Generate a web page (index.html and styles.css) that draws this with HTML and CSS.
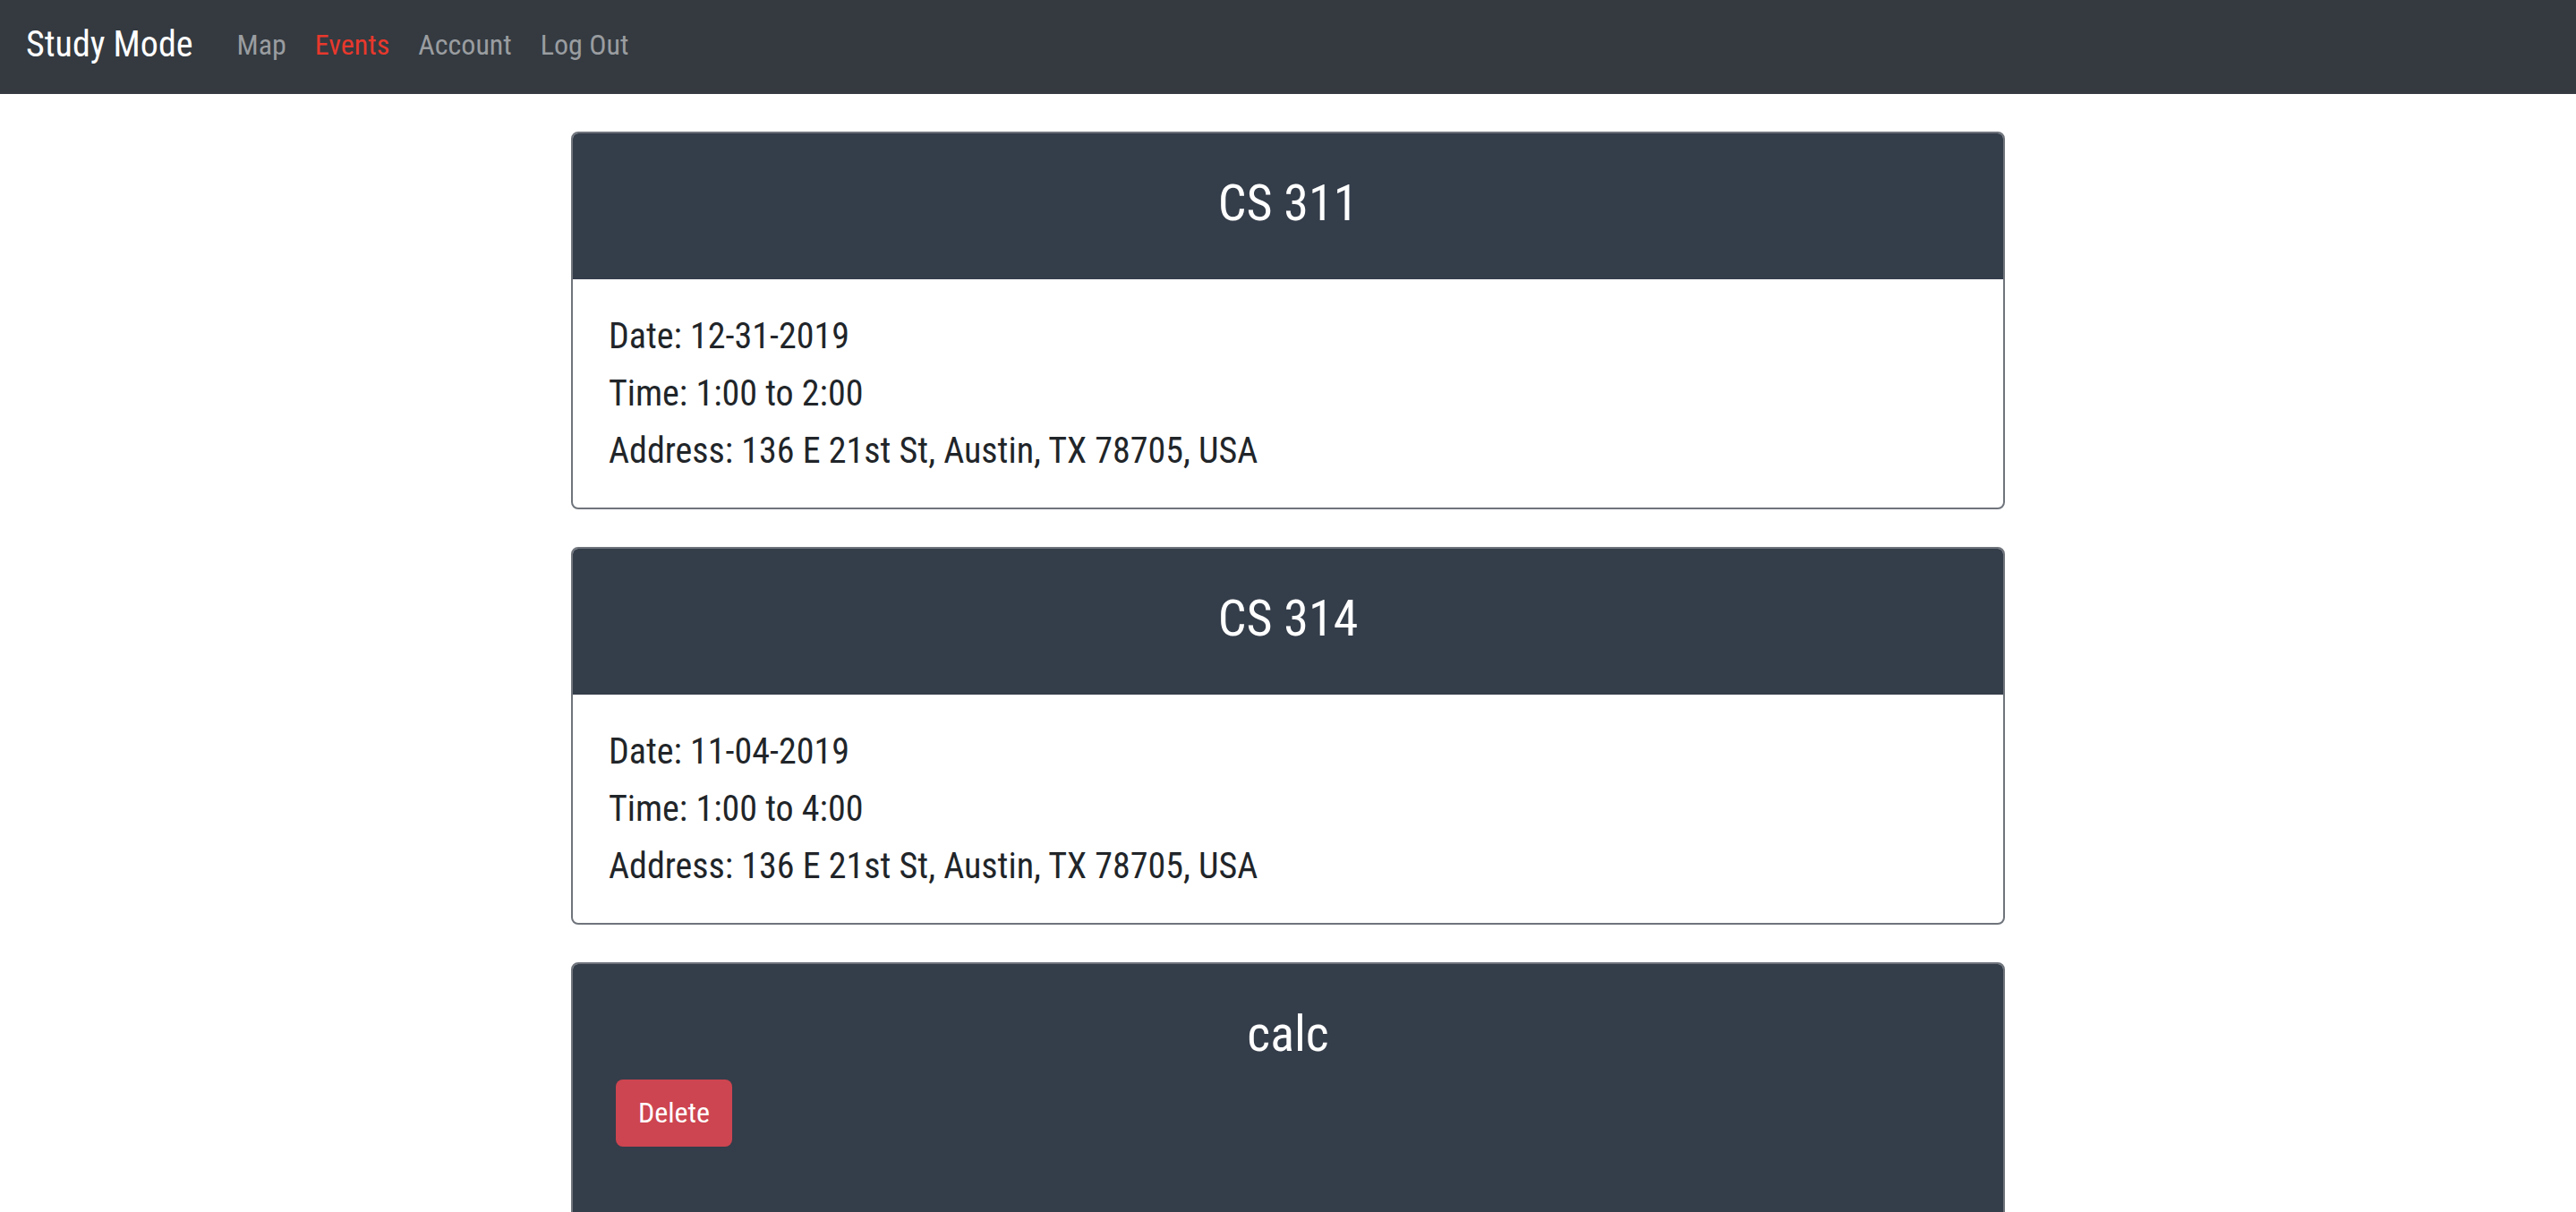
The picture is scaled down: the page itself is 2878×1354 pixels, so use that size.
FILE: index.html
```html
<!DOCTYPE html>
<html lang="en">
<head>
<meta charset="utf-8">
<title>Study Mode</title>
<link rel="stylesheet" href="styles.css">
</head>
<body>
<nav class="navbar">
  <a class="brand" href="#">Study Mode</a>
  <ul class="nav-links">
    <li><a class="nav-link" href="#">Map</a></li>
    <li><a class="nav-link active" href="#">Events</a></li>
    <li><a class="nav-link" href="#">Account</a></li>
    <li><a class="nav-link" href="#">Log Out</a></li>
  </ul>
</nav>
<main class="events">
  <section class="card">
    <header class="card-header"><h3 class="card-title">CS 311</h3></header>
    <div class="card-body">
      <p class="line">Date: 12-31-2019</p>
      <p class="line">Time: 1:00 to 2:00</p>
      <p class="line">Address: 136 E 21st St, Austin, TX 78705, USA</p>
    </div>
  </section>
  <section class="card">
    <header class="card-header"><h3 class="card-title">CS 314</h3></header>
    <div class="card-body">
      <p class="line">Date: 11-04-2019</p>
      <p class="line">Time: 1:00 to 4:00</p>
      <p class="line">Address: 136 E 21st St, Austin, TX 78705, USA</p>
    </div>
  </section>
  <section class="card">
    <header class="card-header card-header-tall">
      <h3 class="card-title">calc</h3>
      <button class="btn-delete" type="button">Delete</button>
    </header>
  </section>
</main>
</body>
</html>
```
FILE: styles.css
```css
* { box-sizing: border-box; }

body {
  margin: 0;
  background: #ffffff;
  color: #212529;
  font-family: "Roboto Condensed", Roboto, "Liberation Sans Narrow", "Liberation Sans", sans-serif;
  font-stretch: 75%;
}

.navbar {
  height: 105px;
  background: #343a40;
  display: flex;
  align-items: center;
  padding: 0 0 6px 29px;
}

.brand {
  color: #ffffff;
  text-decoration: none;
  font-size: 40px;
  line-height: 60px;
  margin-right: 33px;
}

.nav-links {
  list-style: none;
  margin: 0;
  padding: 0;
  display: flex;
}

.nav-link {
  display: block;
  padding: 0 16px;
  font-size: 32px;
  line-height: 48px;
  color: #9a9da0;
  text-decoration: none;
}

.nav-link.active {
  color: #e8382c;
}

.events {
  width: 1602px;
  margin: 42px auto 0;
  display: flex;
  flex-direction: column;
  gap: 42px;
}

.card {
  border: 2px solid #6f747c;
  border-radius: 8px;
  overflow: hidden;
  background: #ffffff;
}

.card-header {
  background: #343d4a;
  color: #ffffff;
  padding: 45px 40px 51px;
}

.card-header-tall {
  padding-bottom: 260px;
}

.card-title {
  margin: 0;
  text-align: center;
  font-weight: 400;
  font-size: 56px;
  line-height: 67px;
}

.btn-delete {
  display: block;
  margin: 17px 0 0 8px;
  height: 75px;
  padding: 0 25px;
  border: none;
  border-radius: 8px;
  background: #cd4550;
  color: #ffffff;
  font-family: inherit;
  font-stretch: 75%;
  font-size: 32px;
  line-height: 75px;
}

.card-body {
  padding: 32px 40px 31px;
}

.line {
  margin: 0;
  font-size: 40px;
  line-height: 64px;
}
```
